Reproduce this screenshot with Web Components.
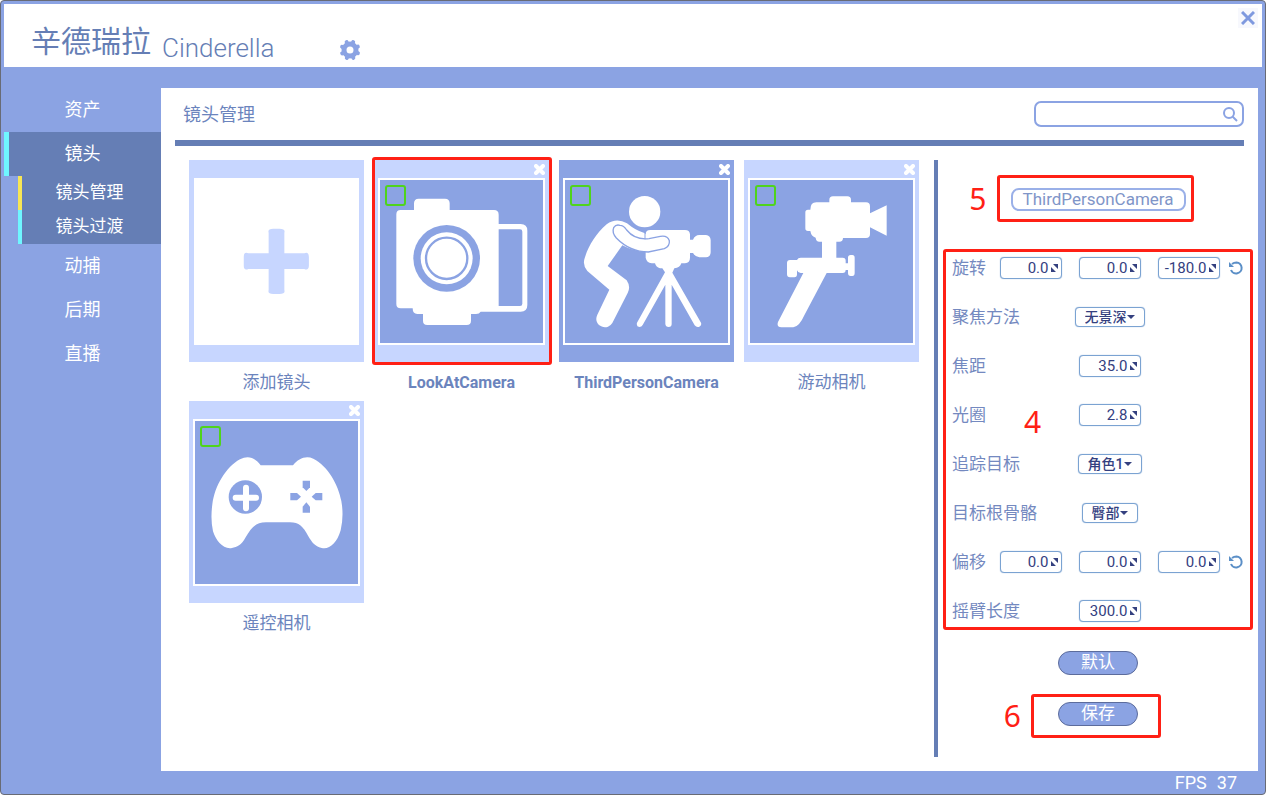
<!DOCTYPE html>
<html lang="zh-CN">
<head>
<meta charset="utf-8">
<title>辛德瑞拉 Cinderella</title>
<style>
  :root{
    --frame:#8ba3e3;
    --deep:#657eb5;
    --pale:#c7d6ff;
    --text:#6b84bd;
    --ink:#34407f;
    --line:#7ba3d2;
    --mark:#ff2015;
  }
  body{
    margin:0;
    font-family:Roboto, "Noto Sans CJK SC", sans-serif;
    font-size:17px;
    color:var(--text);
    background:#fff;
  }
</style>
</head>
<body>

<app-window>
  <title-bar slot="header"></title-bar>

  <side-nav slot="nav">
    <nav-item>资产</nav-item>
    <nav-item current>镜头</nav-item>
    <nav-item sub current>镜头管理</nav-item>
    <nav-item sub>镜头过渡</nav-item>
    <nav-item>动捕</nav-item>
    <nav-item>后期</nav-item>
    <nav-item>直播</nav-item>
  </side-nav>

  <page-head slot="head" heading="镜头管理"></page-head>

  <camera-list>
    <camera-card add name="添加镜头">
      <svg viewBox="45 88 492 492" fill="#c7d6ff">
        <path d="M267 309V246Q263 234 281 234H300Q319 234 315 246V309H376Q389 303 390 320V347Q389 363 376 357H315V421Q319 433 300 433H281Q263 433 267 421V357H205Q191 363 191 347V320Q191 303 205 309Z"/>
      </svg>
    </camera-card>
    <camera-card marked name="LookAtCamera">
      <svg viewBox="30 88 489 489" fill="#fff">
        <path fill-rule="evenodd" d="M132 178V158Q132 144 146 144H225Q239 144 239 158V178H372Q386 178 386 192V220H452Q472 220 472 240V463Q472 483 452 483H332Q328 490 318 490H303V510Q303 523 290 523H172Q159 523 159 510V490H142Q128 490 128 473H92Q79 473 79 460V191Q79 178 92 178ZM386 236V466H450Q457 466 457 459V243Q457 236 450 236Z"/>
        <circle cx="230" cy="323" r="100" fill="#8ba3e3"/>
        <circle cx="230" cy="323" r="78"/>
        <circle cx="230" cy="323" r="62" fill="none" stroke="#8ba3e3" stroke-width="7"/>
      </svg>
    </camera-card>
    <camera-card selected name="ThirdPersonCamera">
      <svg viewBox="30 88 489 489" fill="#fff">
        <circle cx="269" cy="183" r="47"/>
        <path d="M268 247Q242 240 216 218Q184 200 155 221C120 252 98 290 88 326Q83 345 97 361L163 417L127 492C115 518 140 535 159 528Q167 525 172 517L218 427Q228 408 215 389L158 346L202 284Q240 304 272 300V321Q275 336 290 338H300Q303 350 315 353H322L330 365L246 516Q243 528 253 529Q260 529 263 523L331 402V520Q332 529 341 529Q350 529 350 520V402L419 524Q425 531 433 528Q441 524 438 516L352 366L358 353Q375 351 379 338H390Q405 336 405 321V307H414Q422 320 433 320H453Q467 319 467 305V268Q466 254 453 253H433Q420 253 414 267H405V251Q404 238 390 238H286Q272 238 272 251Z"/>
        <path d="M195 224Q183 220 176 231Q170 245 184 262Q225 304 280 304L328 294Q345 287 343 270Q337 253 316 257L282 264Q240 269 215 238Q206 224 195 224Z" stroke="#8ba3e3" stroke-width="4"/>
        <path d="M270 247V266" stroke="#8ba3e3" stroke-width="3"/>
      </svg>
    </camera-card>
    <camera-card name="游动相机">
      <svg viewBox="30 88 489 489" fill="#fff">
        <path d="M268 155V148Q268 137 279 137H322Q333 137 333 148V155H378Q390 155 390 167V188L440 164V255L390 230V250Q390 262 378 262H309Q309 273 298 273H289V321H308Q317 321 317 330V338H324V321Q324 313 332 313H337Q344 313 344 321V367Q344 376 337 376H332Q324 376 324 367V358H317Q317 367 308 367H260L193 494Q178 528 160 530H124Q109 530 114 514L190 367H182Q174 367 171 359V371Q171 380 163 380H150Q141 380 141 371V337Q141 328 150 328H171Q174 321 182 321H246V273H238Q228 273 227 261Q214 258 211 241H204Q196 241 196 233V185Q196 177 204 177H211Q211 155 229 155Z"/>
      </svg>
    </camera-card>
    <camera-card name="遥控相机">
      <svg viewBox="45 75 489 489" fill="#fff">
        <path d="M242 208H339C355 188 377 178 400 188C444 211 475 265 484 315Q492 360 482 403C471 442 447 462 425 456C404 451 396 439 385 421C369 391 357 379 330 379H258C226 379 214 395 197 424C184 448 171 454 156 456C130 461 108 435 99 406Q91 370 97 325C104 270 137 214 180 190C204 178 224 184 242 208Z"/>
        <circle cx="196" cy="303" r="50" fill="#8ba3e3"/>
        <path d="M198 275V337M167 305H228" stroke="#fff" stroke-width="18" stroke-linecap="round"/>
        <g fill="#8ba3e3">
          <path d="M368 254H390V274L379 285L368 274Z"/>
          <path d="M368 350H390V332L379 319L368 332Z"/>
          <path d="M331 291H351L363 302L351 313H331Z"/>
          <path d="M427 291H407L395 302L407 313H427Z"/>
        </g>
      </svg>
    </camera-card>
  </camera-list>

  <camera-panel slot="panel">
    <call-out label="5" style="--ring:-13px -8px -11px -14px">
      <name-field value="ThirdPersonCamera"></name-field>
    </call-out>
    <property-group slot="props">
      <property-row label="旋转" values="0.0,0.0,-180.0" reset></property-row>
      <property-row label="聚焦方法" option="无景深"></property-row>
      <property-row label="焦距" values="35.0"></property-row>
      <property-row label="光圈" values="2.8"></property-row>
      <property-row label="追踪目标" option="角色1"></property-row>
      <property-row label="目标根骨骼" option="臀部"></property-row>
      <property-row label="偏移" values="0.0,0.0,0.0" reset></property-row>
      <property-row label="摇臂长度" values="300.0"></property-row>
    </property-group>
    <pill-button slot="actions">默认</pill-button>
    <call-out slot="actions" label="6" style="--ring:-8px -23px -12px -27px">
      <pill-button>保存</pill-button>
    </call-out>
  </camera-panel>
</app-window>

<script>
// small helper: each component only supplies its markup
class BaseElement extends HTMLElement {
  connectedCallback() {
    if (this.shadowRoot) return;
    this.attachShadow({ mode: "open" });
    this.shadowRoot.innerHTML = this.render();
  }
  attr(name) {
    return this.getAttribute(name) ?? "";
  }
}

class AppWindow extends BaseElement {
  render() {
    return `
      <style>
        :host{
          display:flex; flex-direction:column; box-sizing:border-box; min-height:100vh;
          padding:3px 3px 0; border:1px solid #686b75; border-radius:4px;
          background:var(--frame);
        }
        .body{ flex:1; display:flex }
        main{
          flex:1; display:flex; flex-direction:column; min-width:0;
          margin:21px 4px 0 0; padding:0 5px 14px 14px; box-sizing:border-box; background:#fff;
        }
        .columns{ flex:1; display:flex; padding-top:14px }
        .list{ flex:1; min-width:0 }
        footer{
          display:flex; justify-content:flex-end; gap:10px; padding-right:25px;
          font-size:18px; line-height:23px; color:#fff;
        }
      </style>
      <slot name="header"></slot>
      <div class="body">
        <slot name="nav"></slot>
        <main>
          <slot name="head"></slot>
          <div class="columns">
            <div class="list"><slot></slot></div>
            <slot name="panel"></slot>
          </div>
        </main>
      </div>
      <footer><span>FPS</span><span>37</span></footer>
    `;
  }
}

class TitleBar extends BaseElement {
  render() {
    return `
      <style>
        :host{ display:block }
        header{ display:flex; justify-content:space-between; height:63px; background:#fff }
        .brand{ display:flex; align-items:center; padding:12px 0 0 27px }
        h1{ display:flex; align-items:flex-end; gap:11px; margin:0 64px 0 0; color:var(--deep); font-weight:400 }
        .cn{ font-size:30px; line-height:44px }
        .en{ font-size:26px; line-height:32px; font-weight:300 }
        button{ display:grid; place-items:center; padding:0; border:0; background:none; cursor:pointer }
        .gear{ width:22px; height:22px; margin-top:16px }
        .close{ width:20px; height:20px; margin:4px 4px 0 0; background:#f7f8fd }
      </style>
      <header>
        <div class="brand">
          <h1><span class="cn">辛德瑞拉</span><span class="en">Cinderella</span></h1>
          <button class="gear" type="button" aria-label="设置">
            <svg width="22" height="22" viewBox="-11 -11 22 22" fill="none" stroke="#8ba3e3">
              <circle r="6" stroke-width="5"/>
              <g stroke-width="4" stroke-linecap="round">
                <path d="M0 -7V-8.500M0 7V8.500M-7 0H-8.500M7 0H8.500" transform="rotate(22)"/>
                <path d="M0 -7V-8.500M0 7V8.500M-7 0H-8.500M7 0H8.500" transform="rotate(67)"/>
              </g>
            </svg>
          </button>
        </div>
        <button class="close" type="button" aria-label="关闭">
          <svg width="14" height="14" viewBox="0 0 14 14"><path d="M1 1L13 13M13 1L1 13" stroke="#7f99df" stroke-width="3"/></svg>
        </button>
      </header>
    `;
  }
}

class SideNav extends BaseElement {
  render() {
    return `
      <style>
        :host{ display:block; width:157px; flex:none; padding-top:21px }
        nav{ display:flex; flex-direction:column }
      </style>
      <nav><slot></slot></nav>
    `;
  }
}

class NavItem extends BaseElement {
  render() {
    return `
      <style>
        :host{ display:block }
        a{ display:block; box-sizing:border-box; text-align:center; text-decoration:none; color:#fff; font-size:18px; line-height:44px }
        :host([current]) a{ background:var(--deep); box-shadow:inset 5px 0 #6ff6ff }
        :host([sub]) a{ margin-left:14px; padding-bottom:2px; font-size:17px; line-height:32px; background:var(--deep); box-shadow:inset 4px 0 #6ff6ff }
        :host([sub][current]) a{ box-shadow:inset 4px 0 #f7e655 }
      </style>
      <a href="#"><slot></slot></a>
    `;
  }
}

class PageHead extends BaseElement {
  render() {
    return `
      <style>
        :host{ display:flex; align-items:center; justify-content:space-between; height:52px; margin-right:9px; border-bottom:6px solid var(--deep) }
        h2{ margin:0 0 2px 8px; font-size:18px; font-weight:400 }
        label{ display:flex; align-items:center; box-sizing:border-box; width:210px; height:26px; padding:0 4px; border:2px solid var(--frame); border-radius:7px }
        input{ flex:1; min-width:0; padding:0; border:0; outline:0; background:none; font:inherit; color:inherit }
      </style>
      <h2>${this.attr("heading")}</h2>
      <label>
        <input type="text" aria-label="搜索">
        <svg width="15" height="15" viewBox="0 0 15 15" fill="none" stroke="#8ba3e3" stroke-width="2"><circle cx="6" cy="6" r="5"/><path d="M9.500 9.500L14 14"/></svg>
      </label>
    `;
  }
}

class CameraList extends BaseElement {
  render() {
    return `
      <style>
        :host{ display:flex; flex-wrap:wrap; gap:0 10px; padding-left:14px }
      </style>
      <slot></slot>
    `;
  }
}

class CameraCard extends BaseElement {
  render() {
    const add = this.hasAttribute("add");
    return `
      <style>
        :host{ display:block; width:175px }
        .tile{ position:relative; box-sizing:border-box; height:202px; padding:0 4px; background:var(--pale) }
        :host([selected]) .tile{ background:var(--frame) }
        .bar{ display:flex; justify-content:flex-end; align-items:center; height:18px }
        .bar button{ display:grid; padding:0; border:0; background:none; cursor:pointer }
        .picture{ position:relative; box-sizing:border-box; height:167px; border:2px solid #fff; background:var(--frame) }
        :host([add]) .picture{ margin:0 1px; background:#fff }
        ::slotted(svg){ display:block; width:100%; height:100% }
        input{
          position:absolute; left:5px; top:5px; box-sizing:border-box; width:21px; height:21px; margin:0;
          appearance:none; border:2px solid #4fd41c; border-radius:3px;
        }
        .ring{ position:absolute; inset:-3px -3px -3px -2px; border:3px solid var(--mark); border-radius:3px; pointer-events:none }
        .name{ padding-top:2px; line-height:37px; text-align:center; white-space:nowrap; font-weight:400 }
        .name:lang(en){ font-size:16px; font-weight:700 }
      </style>
      <div class="tile">
        <div class="bar">
          ${add ? "" : `<button type="button" aria-label="删除"><svg width="11" height="11" viewBox="0 0 11 11"><path d="M2 2L9 9M9 2L2 9" stroke="#fff" stroke-width="4" stroke-linecap="round"/></svg></button>`}
        </div>
        <div class="picture">
          <slot></slot>
          ${add ? "" : `<input type="checkbox" aria-label="${this.attr("name")}">`}
        </div>
        ${this.hasAttribute("marked") ? `<div class="ring"></div>` : ""}
      </div>
      <div class="name" lang="${/^[A-Za-z]+$/.test(this.attr("name")) ? "en" : "zh-CN"}">${this.attr("name")}</div>
    `;
  }
}

class CameraPanel extends BaseElement {
  render() {
    return `
      <style>
        :host{ display:flex; flex-direction:column; flex:none; box-sizing:border-box; width:319px; padding:28px 0 0 5px; border-left:4px solid var(--deep) }
        .name{ display:flex; justify-content:center; margin-bottom:38px }
        .actions{ display:flex; flex-direction:column; align-items:center; gap:27px; margin-top:21px }
      </style>
      <div class="name"><slot></slot></div>
      <slot name="props"></slot>
      <div class="actions"><slot name="actions"></slot></div>
    `;
  }
}

// red ring with its step number, drawn over whatever it wraps
class CallOut extends BaseElement {
  render() {
    return `
      <style>
        :host{ display:block; position:relative }
        .ring{
          position:absolute; inset:var(--ring); display:flex; align-items:center;
          border:3px solid var(--mark); border-radius:3px; pointer-events:none;
        }
        span{ position:absolute; right:calc(100% + 13px); font:30px/30px "Noto Sans", sans-serif; color:var(--mark) }
      </style>
      <slot></slot>
      <div class="ring"><span>${this.attr("label")}</span></div>
    `;
  }
}

class NameField extends BaseElement {
  render() {
    return `
      <style>
        :host{ display:block }
        input{
          display:block; box-sizing:border-box; width:175px; height:23px; padding:0 0 2px;
          border:2px solid #9ab0e8; border-radius:8px; outline:0; background:#fff;
          font:inherit; line-height:17px; text-align:center; color:#7f95c8;
        }
      </style>
      <input type="text" aria-label="名称" value="${this.attr("value")}">
    `;
  }
}

class PropertyGroup extends BaseElement {
  render() {
    return `
      <style>
        :host{ position:relative; display:grid; gap:25px; padding:4px 6px; border:3px solid var(--mark); border-radius:3px }
        .step{ position:absolute; left:78px; top:155px; font:30px/30px "Noto Sans", sans-serif; color:var(--mark) }
      </style>
      <slot></slot>
      <span class="step">4</span>
    `;
  }
}

class PropertyRow extends BaseElement {
  render() {
    const values = this.attr("values").split(",").filter(Boolean);
    const option = this.attr("option");
    const fields = values.map((v, i) => `
      <span class="number${values.length === 1 ? " middle" : ""}">
        <input type="text" ${i ? `aria-label="${this.attr("label")} ${i + 1}"` : `id="field"`} value="${v}">
        <svg width="7" height="8" viewBox="0 0 7 8" fill="#34407f"><path d="M2 0H7V5ZM0 3V8H5Z"/></svg>
      </span>`).join("");
    return `
      <style>
        :host{ display:grid; grid-template-columns:39px repeat(3, 79px) 1fr; align-items:center; height:24px }
        label{ white-space:nowrap; line-height:24px; color:#7489c0 }
        .number, .pick{ justify-self:center; display:flex; align-items:center; box-sizing:border-box; border:1px solid var(--line); border-radius:4px; box-shadow:0 0 1px var(--line); background:#fff; color:var(--ink) }
        .number{ width:62px; height:22px; padding-right:3px; gap:2px }
        .middle, .pick{ grid-column:3 }
        input{ flex:1; min-width:0; padding:0; border:0; outline:0; background:none; font:inherit; font-size:15px; text-align:right; color:inherit }
        .pick{ height:20px; padding:0 9px }
        select{ appearance:none; padding:0; border:0; outline:0; background:none; font:inherit; font-size:14px; font-weight:500; line-height:18px; color:inherit }
        button{ justify-self:center; display:grid; padding:0; border:0; background:none; cursor:pointer }
      </style>
      <label for="field">${this.attr("label")}</label>
      ${fields}
      ${option ? `<span class="pick"><select id="field"><option>${option}</option></select><svg width="8" height="4" viewBox="0 0 8 4" fill="#34407f"><path d="M0 0H8L4 4Z"/></svg></span>` : ""}
      ${this.hasAttribute("reset") ? `<button type="button" aria-label="重置"><svg width="14" height="14" viewBox="0 0 14 14" fill="none"><path d="M3 3Q5 1.500 7.500 1.500A5.500 5.500 0 1 1 2 9" stroke="#5b8fc7" stroke-width="2"/><path d="M0 1V6H5Z" fill="#5b8fc7"/></svg></button>` : ""}
    `;
  }
}

class PillButton extends BaseElement {
  render() {
    return `
      <style>
        :host{ display:block }
        button{
          display:block; box-sizing:border-box; width:80px; height:24px; padding:0 0 2px;
          border:1px solid #5c6c9c; border-radius:12px; background:var(--frame);
          font:inherit; line-height:20px; color:#fff; cursor:pointer;
        }
      </style>
      <button type="button"><slot></slot></button>
    `;
  }
}

customElements.define("app-window", AppWindow);
customElements.define("title-bar", TitleBar);
customElements.define("side-nav", SideNav);
customElements.define("nav-item", NavItem);
customElements.define("page-head", PageHead);
customElements.define("camera-list", CameraList);
customElements.define("camera-card", CameraCard);
customElements.define("camera-panel", CameraPanel);
customElements.define("call-out", CallOut);
customElements.define("name-field", NameField);
customElements.define("property-group", PropertyGroup);
customElements.define("property-row", PropertyRow);
customElements.define("pill-button", PillButton);
</script>
</body>
</html>
